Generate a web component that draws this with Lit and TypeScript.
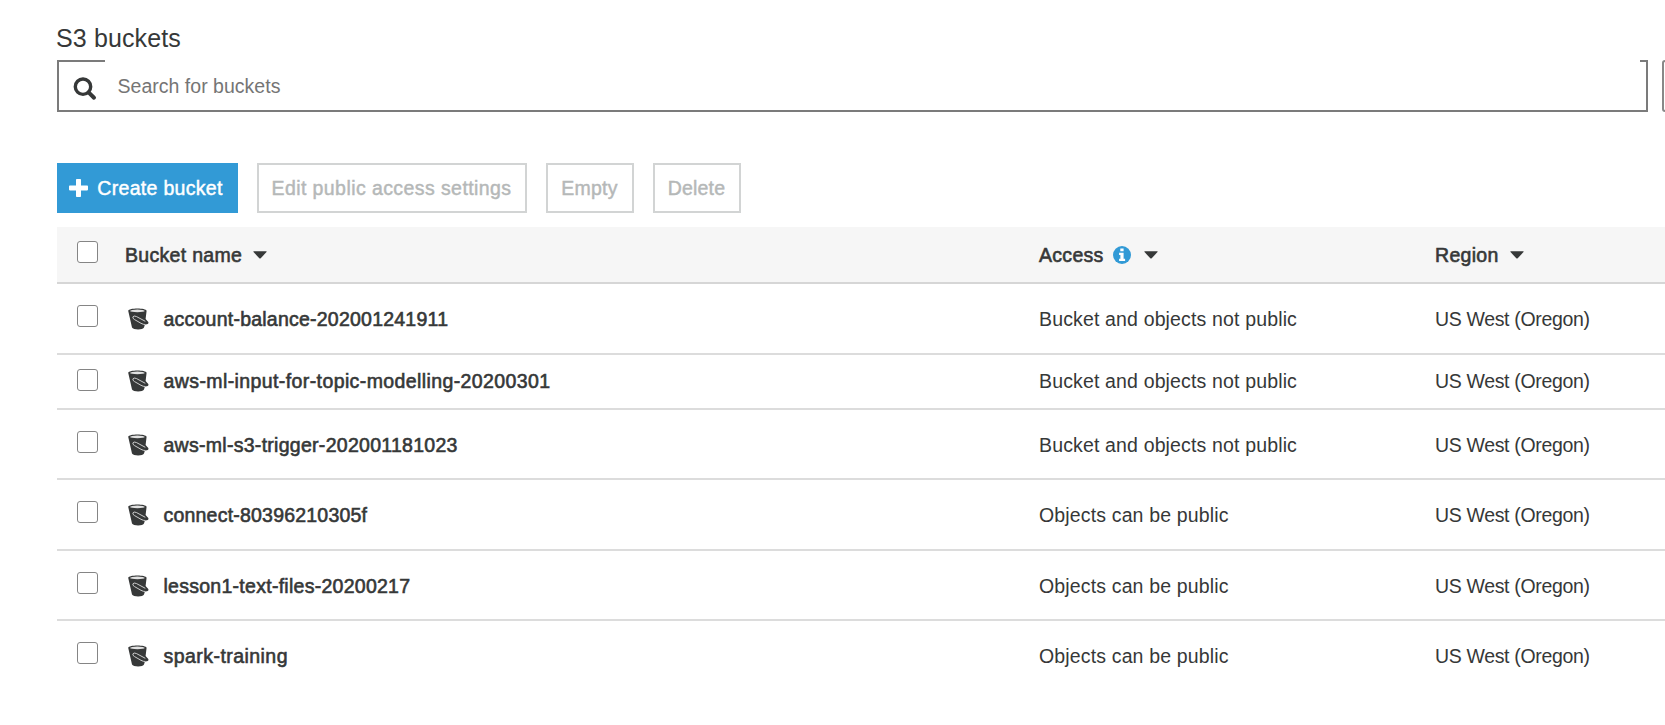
import { LitElement, html, css } from "lit";
import { customElement } from "lit/decorators.js";

interface Bucket {
  name: string;
  access: string;
  region: string;
  tracking: number;
  compact?: boolean;
}

const REGION = "US West (Oregon)";
const PRIVATE = "Bucket and objects not public";
const MIXED = "Objects can be public";

const BUCKETS: Bucket[] = [
  { name: "account-balance-202001241911", access: PRIVATE, region: REGION, tracking: 0.23 },
  { name: "aws-ml-input-for-topic-modelling-20200301", access: PRIVATE, region: REGION, tracking: 0.4, compact: true },
  { name: "aws-ml-s3-trigger-202001181023", access: PRIVATE, region: REGION, tracking: 0.28 },
  { name: "connect-80396210305f", access: MIXED, region: REGION, tracking: 0.21 },
  { name: "lesson1-text-files-20200217", access: MIXED, region: REGION, tracking: 0.27 },
  { name: "spark-training", access: MIXED, region: REGION, tracking: 0.45 },
];

const caret = html`<svg class="caret" width="14" height="8" viewBox="0 0 14 8">
  <path d="M.9.2h12.2q.9 0 .4.8L7.7 7.3q-.7.6-1.4 0L.5 1Q0 .2.9.2z" fill="#363838" />
</svg>`;

const bucketIcon = html`<svg class="bucket" width="22" height="22" viewBox="0 0 22 22">
  <path d="M.2 2.8C.8-.2 18-.2 18.6 2.8L17.6 11 20.3 14Q21.2 16.6 16.9 16.4L16 19.6C15.3 22.2 5 22.2 4 19.6z" fill="#363838" />
  <ellipse cx="9.4" cy="2.9" rx="7.3" ry="1.3" fill="#e2e2e2" />
  <path d="M17.3 13.3 8.4 8.5Q5.6 7.3 4.9 8.9 4.4 10.3 6.4 11.5L13 15.3Q15.4 16.6 17.2 16.5" fill="none" stroke="#dcdcdc" stroke-width=".9" />
</svg>`;

@customElement("app-root")
export class AppRoot extends LitElement {
  static styles = css`
    :host {
      display: block;
      width: 1665px;
      height: 725px;
      overflow: hidden;
      background: #fff;
      color: #363838;
      font: 19.5px/24px "Liberation Sans", Arial, sans-serif;
      letter-spacing: 0.15px;
      white-space: nowrap;
    }
    * { box-sizing: border-box; }
    svg { display: block; flex: none; }
    .page { padding: 23px 0 0 56.5px; }
    h1 {
      margin: 0;
      font-size: 25px;
      line-height: 30px;
      font-weight: 400;
      letter-spacing: 0.12px;
      text-indent: -0.5px;
    }
    .search-row { display: flex; gap: 14px; margin-top: 7px; width: 1640px; }
    .search {
      display: grid;
      grid-template-columns: 48px 1fr 8px;
      flex: none;
      width: 1591px;
      height: 52px;
    }
    .lead, .tail, .field { border: 0 solid #7b7b7b; border-bottom-width: 2px; }
    .lead { border-top-width: 2px; border-left-width: 2px; padding: 15px 0 0 14px; }
    .tail { border-top-width: 2px; border-right-width: 2px; }
    .field { padding: 14px 0 0 13px; color: #757575; letter-spacing: 0.02px; }
    .next { flex: none; width: 42px; height: 52px; border: 2px solid #888; border-radius: 3px; }
    .actions { display: flex; gap: 19px; margin-top: 51px; height: 50px; }
    .btn {
      display: flex;
      align-items: center;
      justify-content: center;
      border: 2px solid #d2d4d4;
      color: #b5b8b8;
      -webkit-text-stroke: 0.45px currentColor;
    }
    .create {
      width: 181px;
      gap: 9px;
      padding-right: 2px;
      border: 0;
      background: #329ad6;
      color: #fff;
      letter-spacing: 0.3px;
    }
    .edit { width: 270px; letter-spacing: 0.42px; }
    .empty, .delete { width: 88px; letter-spacing: 0.2px; }
    .table { margin-top: 14px; }
    .row {
      display: grid;
      grid-template-columns: 68.5px 914px 396px 1fr;
      align-items: center;
      height: 70.5px;
      border-bottom: 2px solid #dcdcdc;
    }
    .row.compact { height: 55px; }
    .row:last-child { border-color: transparent; }
    .head { height: 57px; background: #f6f6f6; border-color: #d6d6d6; }
    .strong { -webkit-text-stroke: 0.6px currentColor; }
    .head .strong { letter-spacing: 0.3px; }
    .check {
      width: 21px;
      height: 22px;
      margin: 0 0 4.5px 20.5px;
      border: 1.5px solid #858585;
      border-radius: 3px;
      background: #fff;
    }
    .compact .check { margin-bottom: 2px; }
    .cell { display: flex; align-items: center; padding-top: 1.5px; }
    .compact .cell, .head .cell { padding-top: 0; }
    .name { padding-left: 3px; gap: 13.5px; }
    .head .name { padding-left: 0; gap: 11px; }
    .head .access { gap: 9.5px; }
    .head .access .caret { margin-left: 3.5px; }
    .region { letter-spacing: -0.34px; }
    .head .region { gap: 11.5px; }
  `;

  private renderBucket(b: Bucket) {
    return html`<div class="row ${b.compact ? "compact" : ""}">
      <span class="check"></span>
      <div class="cell name">
        ${bucketIcon}<span class="strong" style="letter-spacing:${b.tracking}px">${b.name}</span>
      </div>
      <div class="cell access">${b.access}</div>
      <div class="cell region">${b.region}</div>
    </div>`;
  }

  render() {
    return html`<div class="page">
      <h1>S3 buckets</h1>
      <div class="search-row">
        <div class="search">
          <div class="lead">
            <svg width="24" height="24" viewBox="0 0 24 24" fill="none" stroke="#363838">
              <circle cx="10" cy="9.7" r="7.7" stroke-width="3.4" />
              <path d="M15.6 15.4 21 20.7" stroke-width="4" stroke-linecap="round" />
            </svg>
          </div>
          <div class="field">Search for buckets</div>
          <div class="tail"></div>
        </div>
        <div class="next"></div>
      </div>
      <div class="actions">
        <div class="btn create">
          <svg width="19" height="18" viewBox="0 0 19 18">
            <path d="M7 .8q0-.8.8-.8h3.4q.8 0 .8.8V6.6h6.2q.8 0 .8.8v3.2q0 .8-.8.8H12v5.8q0 .8-.8.8H7.8q-.8 0-.8-.8v-5.8H.8q-.8 0-.8-.8V7.4q0-.8.8-.8H7z" fill="#fff" />
          </svg>
          <span>Create bucket</span>
        </div>
        <div class="btn edit">Edit public access settings</div>
        <div class="btn empty">Empty</div>
        <div class="btn delete">Delete</div>
      </div>
      <div class="table">
        <div class="row head">
          <span class="check"></span>
          <div class="cell name"><span class="strong">Bucket name</span>${caret}</div>
          <div class="cell access">
            <span class="strong">Access</span>
            <svg width="18" height="18" viewBox="0 0 18 18">
              <circle cx="9" cy="9" r="9" fill="#329ad6" />
              <path d="M7.3 2.6h3.3v2.7H7.3zM6.1 6.8h4.5v6h1.5v2.3H6.1v-2.3h1.3V9H6.1z" fill="#fff" />
            </svg>
            ${caret}
          </div>
          <div class="cell region"><span class="strong">Region</span>${caret}</div>
        </div>
        ${BUCKETS.map((b) => this.renderBucket(b))}
      </div>
    </div>`;
  }
}
